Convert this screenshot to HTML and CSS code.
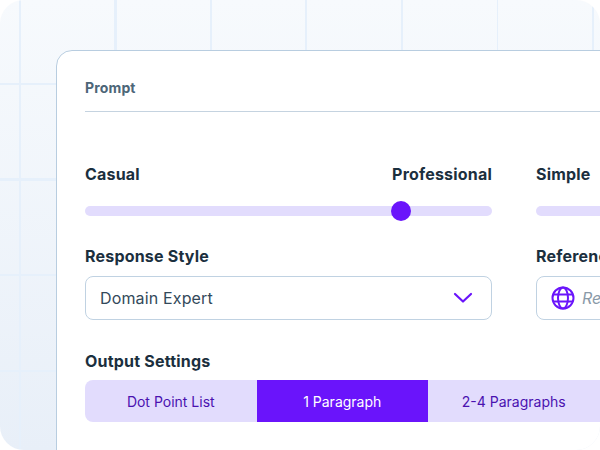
FILE: index.html
```html
<!DOCTYPE html>
<html lang="en">
<head>
<meta charset="utf-8">
<title>Prompt</title>
<link rel="stylesheet" href="styles.css">
</head>
<body>
<main class="frame">
  <section class="card">
    <h2 class="card-title">Prompt</h2>
    <div class="fields">
      <div class="field slider-field">
        <div class="slider-labels"><span>Casual</span><span>Professional</span></div>
        <div class="track"><span class="thumb"></span></div>
      </div>
      <div class="field slider-field">
        <div class="slider-labels"><span>Simple</span></div>
        <div class="track"></div>
      </div>
      <div class="field">
        <label class="label">Response Style</label>
        <div class="input">
          <span class="value">Domain Expert</span>
          <svg class="chevron" width="20" height="12" viewBox="0 0 20 12" fill="none"><path d="M2 2l8 7.500L18 2" stroke="#6a14fb" stroke-width="2.200" stroke-linecap="round" stroke-linejoin="round"/></svg>
        </div>
      </div>
      <div class="field">
        <label class="label">Reference</label>
        <div class="input input-ref">
          <svg class="globe" width="24" height="24" viewBox="0 0 24 24" fill="none" stroke="#6a14fb" stroke-width="2"><circle cx="12" cy="12" r="10.500"/><ellipse cx="12" cy="12" rx="5" ry="10.500"/><path d="M2 8.500h20M2 15.500h20"/></svg>
          <span class="placeholder">Reference URL</span>
        </div>
      </div>
    </div>
    <div class="output">
      <div class="label">Output Settings</div>
      <div class="segments">
        <span class="segment">Dot Point List</span>
        <span class="segment active">1 Paragraph</span>
        <span class="segment">2-4 Paragraphs</span>
      </div>
    </div>
  </section>
</main>
</body>
</html>
```
FILE: styles.css
```css
* { box-sizing: border-box; }
html, body { margin: 0; height: 100%; background: #fff; overflow: hidden; }
body { font-family: "Inter", "Liberation Sans", sans-serif; color: #1b2f3e; }
.frame {
  width: 600px;
  height: 450px;
  padding: 50px 0 0 56px;
  border-radius: 24px;
  overflow: hidden;
  background-color: #f0f4fb;
  background-image:
    repeating-linear-gradient(90deg, transparent 0 19px, #e6f0fb 19px 21px, transparent 21px 95.500px),
    repeating-linear-gradient(180deg, transparent 0 83px, #e6f0fb 83px 85px, transparent 85px 95.500px),
    linear-gradient(180deg, #f7fafd 0%, #e8eff8 100%);
}
.card {
  width: 700px;
  height: 480px;
  padding: 28px 0 0 28px;
  background: #fff;
  border: 1px solid #b8cde0;
  border-radius: 16px;
}
.card-title {
  margin: 0;
  height: 33px;
  font-size: 14px;
  line-height: 18px;
  font-weight: 700;
  letter-spacing: 0.15px;
  color: #4d6678;
  border-bottom: 1px solid #c5d3e0;
}
.fields {
  display: grid;
  grid-template-columns: 407px 407px;
  column-gap: 44px;
  row-gap: 29px;
  margin-top: 51px;
}
.slider-labels {
  display: flex;
  justify-content: space-between;
  font-size: 16px;
  line-height: 22px;
  font-weight: 700;
  letter-spacing: 0.2px;
}
.track {
  position: relative;
  height: 10px;
  margin-top: 21px;
  border-radius: 5px;
  background: #e2dcfd;
}
.thumb {
  position: absolute;
  left: 306px;
  top: -5px;
  width: 20px;
  height: 20px;
  border-radius: 50%;
  background: #6a14fb;
}
.label {
  display: block;
  font-size: 16px;
  line-height: 22px;
  font-weight: 700;
  letter-spacing: 0.2px;
}
.input {
  display: flex;
  align-items: center;
  height: 44px;
  margin-top: 9px;
  padding: 0 18px 0 14px;
  border: 1px solid #c0d2e2;
  border-radius: 8px;
}
.value {
  flex: 1;
  font-size: 16px;
  letter-spacing: 0.15px;
  color: #33495a;
}
.input-ref { gap: 7px; }
.globe { flex: none; }
.placeholder {
  font-size: 16px;
  font-style: italic;
  color: #8a9aa8;
  white-space: nowrap;
}
.output { margin-top: 30px; }
.segments {
  display: grid;
  grid-template-columns: 171.500px 171.500px 171.500px;
  height: 42px;
  margin-top: 8px;
}
.segment {
  display: flex;
  align-items: center;
  justify-content: center;
  font-size: 14px;
  color: #4a12b0;
  background: #e2dcfd;
}
.segment:first-child { border-radius: 8px 0 0 8px; }
.segment.active { background: #6a14fb; color: #fff; }
```
